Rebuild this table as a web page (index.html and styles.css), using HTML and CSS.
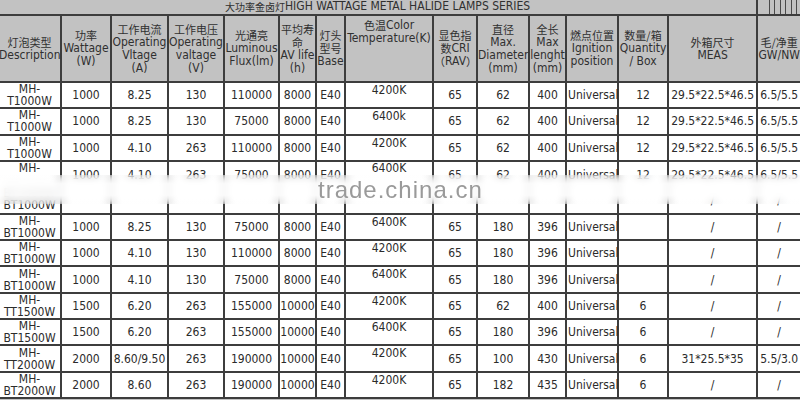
FILE: index.html
```html
<!DOCTYPE html>
<html lang="zh">
<head>
<meta charset="utf-8">
<title>大功率金卤灯 HIGH WATTAGE METAL HALIDE LAMPS SERIES</title>
<link rel="stylesheet" href="styles.css">
</head>
<body>
<div class="sheet">
<table class="spec">
<colgroup>
<col class="c1"><col class="c2"><col class="c3"><col class="c4"><col class="c5"><col class="c6"><col class="c7"><col class="c8"><col class="c9"><col class="c10"><col class="c11"><col class="c12"><col class="c13"><col class="c14"><col class="c15">
</colgroup>
<tr class="title-row">
<td colspan="14" class="title"><span class="zh">大功率金卤灯</span>HIGH WATTAGE METAL HALIDE LAMPS SERIES</td>
<td class="ticks-cell"><div class="ticks"></div></td>
</tr>
<tr class="head-row">
<th><span class="zh">灯泡类型</span><br>Description</th>
<th><span class="zh">功率</span><br>Wattage<br>(W)</th>
<th><span class="zh">工作电流</span><br>Operating<br>Vltage<br>(A)</th>
<th><span class="zh">工作电压</span><br>Operating<br>valtage<br>(V)</th>
<th><span class="zh">光通亮</span><br>Luminous<br>Flux(lm)</th>
<th><span class="zh">平均寿</span><br><span class="zh">命</span><br>AV life<br>(h)</th>
<th><span class="zh">灯头</span><br><span class="zh">型号</span><br>Base</th>
<th class="top"><span class="zh">色温</span>Color<br>Temperature(K)</th>
<th><span class="zh">显色指</span><br><span class="zh">数</span>CRI<br><span class="zh">（</span>RAV<span class="zh">）</span></th>
<th><span class="zh">直径</span><br>Max.<br>Diameter<br>(mm)</th>
<th><span class="zh">全长</span><br>Max<br>lenght<br>(mm)</th>
<th><span class="zh">燃点位置</span><br>Ignition<br>position</th>
<th><span class="zh">数量/箱</span><br>Quantity<br>/ Box</th>
<th><span class="zh">外箱尺寸</span><br>MEAS</th>
<th><span class="zh">毛/净重</span><br>GW/NW</th>
</tr>
<tr class="row"><td class="desc">MH-<br>T1000W</td><td>1000</td><td>8.25</td><td>130</td><td>110000</td><td>8000</td><td>E40</td><td class="ct">4200K</td><td>65</td><td>62</td><td>400</td><td class="left">Universal</td><td>12</td><td>29.5*22.5*46.5</td><td>6.5/5.5</td></tr>
<tr class="row"><td class="desc">MH-<br>T1000W</td><td>1000</td><td>8.25</td><td>130</td><td>75000</td><td>8000</td><td>E40</td><td class="ct">6400k</td><td>65</td><td>62</td><td>400</td><td class="left">Universal</td><td>12</td><td>29.5*22.5*46.5</td><td>6.5/5.5</td></tr>
<tr class="row"><td class="desc">MH-<br>T1000W</td><td>1000</td><td>4.10</td><td>263</td><td>110000</td><td>8000</td><td>E40</td><td class="ct">4200K</td><td>65</td><td>62</td><td>400</td><td class="left">Universal</td><td>12</td><td>29.5*22.5*46.5</td><td>6.5/5.5</td></tr>
<tr class="tall"><td class="desc">MH-<br>&nbsp;<br>BT1000W<br>BT1000W</td><td>1000</td><td>4.10</td><td>263</td><td>75000</td><td>8000</td><td>E40</td><td class="ct">6400K</td><td>65</td><td>62</td><td>400</td><td class="left">Universal</td><td>12</td><td class="stack">29.5*22.5*46.5<br>&nbsp;<br>/</td><td class="stack">6.5/5.5<br>&nbsp;<br>/</td></tr>
<tr class="row"><td class="desc">MH-<br>BT1000W</td><td>1000</td><td>8.25</td><td>130</td><td>75000</td><td>8000</td><td>E40</td><td class="ct">6400K</td><td>65</td><td>180</td><td>396</td><td class="left">Universal</td><td></td><td>/</td><td>/</td></tr>
<tr class="row"><td class="desc">MH-<br>BT1000W</td><td>1000</td><td>4.10</td><td>130</td><td>110000</td><td>8000</td><td>E40</td><td class="ct">4200K</td><td>65</td><td>180</td><td>396</td><td class="left">Universal</td><td></td><td>/</td><td>/</td></tr>
<tr class="row"><td class="desc">MH-<br>BT1000W</td><td>1000</td><td>4.10</td><td>130</td><td>75000</td><td>8000</td><td>E40</td><td class="ct">6400K</td><td>65</td><td>180</td><td>396</td><td class="left">Universal</td><td></td><td>/</td><td>/</td></tr>
<tr class="row"><td class="desc">MH-<br>TT1500W</td><td>1500</td><td>6.20</td><td>263</td><td>155000</td><td>10000</td><td>E40</td><td class="ct">4200K</td><td>65</td><td>62</td><td>400</td><td class="left">Universal</td><td>6</td><td>/</td><td>/</td></tr>
<tr class="row"><td class="desc">MH-<br>BT1500W</td><td>1500</td><td>6.20</td><td>263</td><td>155000</td><td>10000</td><td>E40</td><td class="ct">6400K</td><td>65</td><td>180</td><td>396</td><td class="left">Universal</td><td>6</td><td>/</td><td>/</td></tr>
<tr class="row"><td class="desc">MH-<br>TT2000W</td><td>2000</td><td>8.60/9.50</td><td>263</td><td>190000</td><td>10000</td><td>E40</td><td class="ct">4200K</td><td>65</td><td>100</td><td>430</td><td class="left">Universal</td><td>6</td><td>31*25.5*35</td><td>5.5/3.0</td></tr>
<tr class="row"><td class="desc">MH-<br>BT2000W</td><td>2000</td><td>8.60</td><td>263</td><td>190000</td><td>10000</td><td>E40</td><td class="ct">4200K</td><td>65</td><td>182</td><td>435</td><td class="left">Universal</td><td>6</td><td>/</td><td>/</td></tr>
</table>
<div class="wm-band"></div>
<div class="wm-text">trade.china.cn</div>
</div>
</body>
</html>
```

FILE: styles.css
```css
html, body {
  margin: 0;
  padding: 0;
}
body {
  background: #c2c2c2;
  font-family: "DejaVu Sans Condensed", "DejaVu Sans", "Noto Sans CJK SC", sans-serif;
  font-stretch: condensed;
  font-size: 12px;
  color: #2b2b2b;
}
.sheet {
  position: relative;
  width: 800px;
  height: 400px;
  overflow: hidden;
  background: #c2c2c2;
}
.spec {
  border-collapse: collapse;
  table-layout: fixed;
  width: 802px;
  margin: -1px 0 0 -1px;
}
.c1 { width: 62px; }
.c2 { width: 50px; }
.c3 { width: 57px; }
.c4 { width: 56px; }
.c5 { width: 55px; }
.c6 { width: 37px; }
.c7 { width: 29px; }
.c8 { width: 88px; }
.c9 { width: 44px; }
.c10 { width: 52px; }
.c11 { width: 37px; }
.c12 { width: 52px; }
.c13 { width: 50px; }
.c14 { width: 89px; }
.c15 { width: 44px; }

.spec td, .spec th {
  border: 2px solid #3d3d3d;
  padding: 0;
  text-align: center;
  vertical-align: middle;
  white-space: nowrap;
  font-weight: normal;
  line-height: 12px;
}
.spec td {
  background: #ffffff;
}
.spec th {
  background: #c2c2c2;
  color: #303030;
  line-height: 13px;
}
.zh {
  font-family: "Noto Sans CJK SC", sans-serif;
  font-size: 11px;
  line-height: 13px;
  vertical-align: top;
}
.spec tr.title-row { height: 16px; }
.spec tr.head-row { height: 67px; }
.spec tr.row { height: 26.3px; }
.spec tr.tall { height: 53px; }

.spec tr.title-row td {
  background: #c2c2c2;
  border-top: none;
  line-height: 13px;
  color: #303030;
}
.spec tr.title-row td.title {
  text-align: center;
  border-left: none;
}
.title .zh {
  font-size: 10px;
}
.ticks {
  margin-left: 11px;
  height: 14px;
  background: repeating-linear-gradient(90deg, #4a4a4a 0 1px, transparent 1px 5.4px);
}
.spec th.top {
  vertical-align: top;
  padding-top: 3px;
}
.spec td.desc,
.spec th:first-child {
  border-left: none;
}
.spec td.ct {
  vertical-align: top;
  padding-top: 1px;
}
.spec td.left {
  text-align: left;
  padding-left: 1px;
}
.spec tr.tall td {
  vertical-align: top;
  padding-top: 7px;
  line-height: 12.5px;
}
.spec tr.tall td.desc,
.spec tr.tall td.ct {
  padding-top: 0;
}
.wm-band {
  position: absolute;
  left: 0;
  top: 175px;
  width: 800px;
  height: 29px;
  backdrop-filter: blur(4px);
  background: linear-gradient(to bottom, rgba(255,255,255,0.2) 0, rgba(255,255,255,0.85) 30%, rgba(255,255,255,0.85) 70%, rgba(255,255,255,0.2) 100%);
}
.wm-text {
  position: absolute;
  left: 318px;
  top: 176px;
  font-family: "Liberation Sans", Arial, sans-serif;
  font-stretch: normal;
  font-size: 24px;
  letter-spacing: 1px;
  line-height: 28px;
  color: #9a9a9a;
}
```
